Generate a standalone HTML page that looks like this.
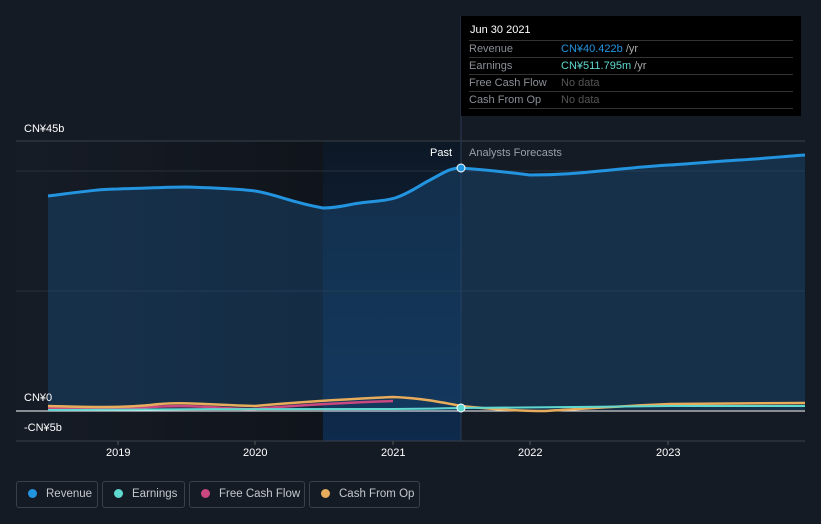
<!DOCTYPE html>
<html><head><meta charset="utf-8"><style>
body{margin:0;width:821px;height:524px;background:#151b25;font-family:"Liberation Sans",sans-serif;overflow:hidden;position:relative}
.t{position:absolute;font-size:11px;color:#fff;white-space:nowrap}
.tip{position:absolute;left:461px;top:16px;width:340px;height:100px;background:#000;}
.tip .r{position:absolute;left:8px;width:324px;border-top:1px solid #333;height:16px;font-size:11px;color:#8a8f96;line-height:17px}
.leg{position:absolute;top:481px;height:27px;border:1px solid #3a3f48;border-radius:3px;color:#c5c8cc;font-size:11.5px;line-height:25px;box-sizing:border-box;white-space:nowrap;overflow:hidden}
.leg i{display:inline-block;width:9px;height:9px;border-radius:50%;margin:0 9px 0 11px;vertical-align:-1px}
</style></head><body>
<svg width="821" height="524" style="position:absolute;left:0;top:0">
<defs>
<linearGradient id="dk" x1="0" x2="1" y1="0" y2="0"><stop offset="0" stop-color="#161c26"/><stop offset="1" stop-color="#10141b"/></linearGradient>
<linearGradient id="bl" x1="0" x2="0" y1="0" y2="1"><stop offset="0" stop-color="#0d1826"/><stop offset="1" stop-color="#0e2a4c"/></linearGradient>
</defs>
<rect x="16" y="141" width="307" height="300" fill="url(#dk)"/>
<rect x="323" y="141" width="138" height="300" fill="url(#bl)"/>
<line x1="16" y1="141" x2="805" y2="141" stroke="#3a404a"/>
<line x1="16" y1="171" x2="805" y2="171" stroke="#2a303a"/>
<line x1="16" y1="291" x2="805" y2="291" stroke="#2a303a"/>
<line x1="16" y1="441" x2="805" y2="441" stroke="#3a404a"/>
<line x1="461" y1="16" x2="461" y2="441" stroke="#2a3a55"/>
<path d="M48,196 C80,192 100,189 118,189 C150,188 170,187 185,187 C220,188 240,189 255,191 C275,194 290,202 323,208 C340,208 350,204 360,203 C375,201 385,201 395,198 C410,193 420,185 430,180 C445,172 450,168 461,168 C475,169 490,170 530,175 C560,175 580,173 600,171 C630,168 650,166 670,165 C700,163 720,161 740,160 C770,158 790,156 805,155 L805,410 L48,410 Z" fill="#1b4b78" fill-opacity="0.45"/>
<path d="M48,196 C80,192 100,189 118,189 C150,188 170,187 185,187 C220,188 240,189 255,191 C275,194 290,202 323,208 C340,208 350,204 360,203 C375,201 385,201 395,198 C410,193 420,185 430,180 C445,172 450,168 461,168 C475,169 490,170 530,175 C560,175 580,173 600,171 C630,168 650,166 670,165 C700,163 720,161 740,160 C770,158 790,156 805,155" fill="none" stroke="#2394e0" stroke-width="3"/>
<line x1="16" y1="411" x2="805" y2="411" stroke="#fff" stroke-width="1"/>
<path d="M48,408 C90,410 120,409 150,407 C200,404 230,410 255,409 C300,405 340,403 393,401" fill="none" stroke="#c9487f" stroke-width="2.5"/>
<path d="M48,406 C90,407 120,408 150,405 C180,401 210,405 255,406 C300,402 350,399 393,397 C420,398 440,402 461,406 C490,409 520,411 545,411 C580,409 620,406 670,404 C720,404 760,403 805,403" fill="none" stroke="#e8ad5c" stroke-width="2.5"/>
<path d="M48,410 C150,409 300,409 393,409 C430,409 450,408 461,408 C520,407 600,407 670,406 C740,406 780,406 805,406" fill="none" stroke="#5fd9cf" stroke-width="2"/>
<circle cx="461" cy="168" r="4" fill="#2394e0" stroke="#fff" stroke-width="1"/>
<circle cx="461" cy="408" r="4" fill="#5fd9cf" stroke="#fff" stroke-width="1"/>
<g stroke="#555" ><line x1="118" y1="441" x2="118" y2="445"/><line x1="255" y1="441" x2="255" y2="445"/><line x1="393" y1="441" x2="393" y2="445"/><line x1="530" y1="441" x2="530" y2="445"/><line x1="668" y1="441" x2="668" y2="445"/></g>
</svg>
<div class="t" style="left:24px;top:123px">CN¥45b</div>
<div class="t" style="left:24px;top:392px">CN¥0</div>
<div class="t" style="left:24px;top:422px">-CN¥5b</div>
<div class="t" style="left:430px;top:147px">Past</div>
<div class="t" style="left:469px;top:147px;color:#9aa0a8">Analysts Forecasts</div>
<div class="t" style="left:106px;top:447px">2019</div>
<div class="t" style="left:243px;top:447px">2020</div>
<div class="t" style="left:381px;top:447px">2021</div>
<div class="t" style="left:518px;top:447px">2022</div>
<div class="t" style="left:656px;top:447px">2023</div>
<div class="tip">
<div style="position:absolute;left:9px;top:8px;color:#fff;font-size:11px">Jun 30 2021</div>
<div class="r" style="top:24px">Revenue<span style="position:absolute;left:92px;color:#2394e0">CN¥40.422b <span style="color:#aaa">/yr</span></span></div>
<div class="r" style="top:41px">Earnings<span style="position:absolute;left:92px;color:#5fd9cf">CN¥511.795m <span style="color:#aaa">/yr</span></span></div>
<div class="r" style="top:58px">Free Cash Flow<span style="position:absolute;left:92px;color:#555">No data</span></div>
<div class="r" style="top:75px">Cash From Op<span style="position:absolute;left:92px;color:#555">No data</span></div>
<div class="r" style="top:92px;height:0"></div>
</div>
<div class="leg" style="left:16px;width:82px"><i style="background:#2394e0"></i>Revenue</div>
<div class="leg" style="left:102px;width:83px"><i style="background:#5fd9cf"></i>Earnings</div>
<div class="leg" style="left:189px;width:116px"><i style="background:#c9487f"></i>Free Cash Flow</div>
<div class="leg" style="left:309px;width:111px"><i style="background:#e8ad5c"></i>Cash From Op</div>
</body></html>
